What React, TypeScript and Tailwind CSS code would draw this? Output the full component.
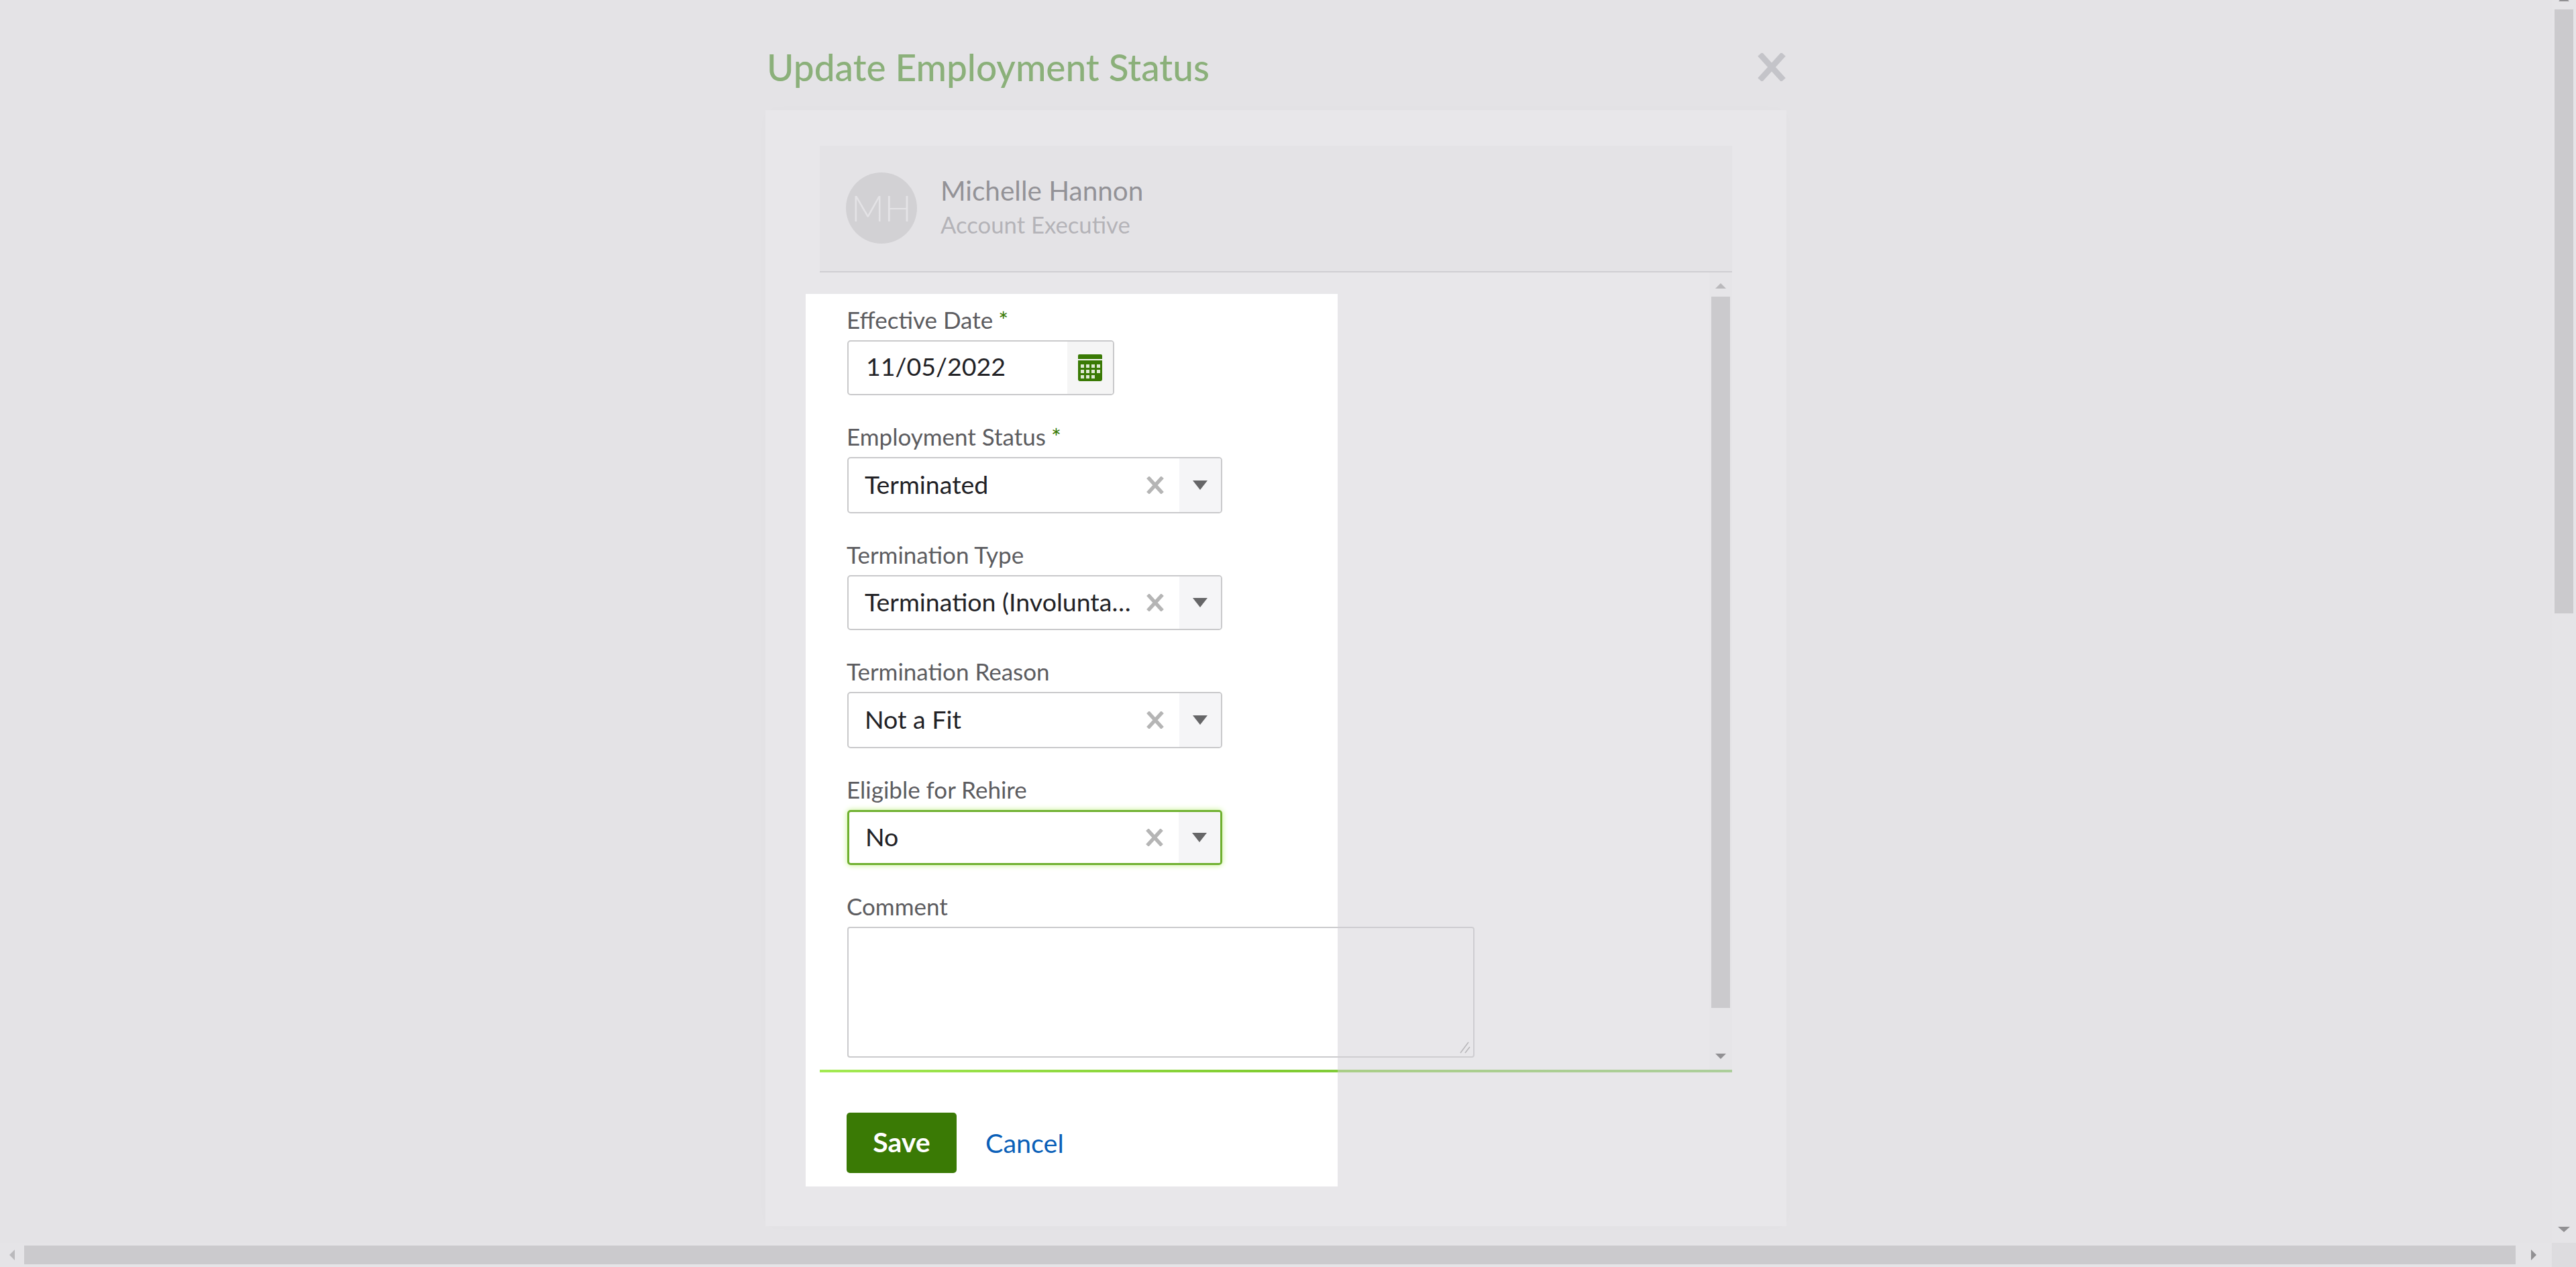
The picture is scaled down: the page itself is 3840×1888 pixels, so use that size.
import React from 'react';

function Cross({ className }: { className: string }) {
  return (
    <svg viewBox="0 0 24 24" className={className} fill="none" stroke="currentColor" strokeWidth="5">
      <path d="M2 1 L22 23 M22 1 L2 23" />
    </svg>
  );
}

function Arrow({ dir, className }: { dir: 'up' | 'down' | 'left' | 'right'; className: string }) {
  const points = {
    up: '8,0 16,8 0,8',
    down: '0,0 16,0 8,8',
    left: '8,0 8,16 0,8',
    right: '0,0 8,8 0,16',
  }[dir];
  const box = dir === 'up' || dir === 'down' ? '0 0 16 8' : '0 0 8 16';
  return (
    <svg viewBox={box} preserveAspectRatio="none" className={className} fill="currentColor">
      <polygon points={points} />
    </svg>
  );
}

function CalendarIcon() {
  const cells = [
    [4, 15], [12, 15], [20, 15], [28, 15],
    [4, 23], [12, 23], [20, 23], [28, 23],
    [4, 31], [12, 31], [20, 31],
  ];
  return (
    <svg viewBox="0 0 36 40" className="w-[36px] h-[40px]">
      <path d="M2 0 H34 Q36 0 36 2 V7 H0 V2 Q0 0 2 0 Z" fill="#3a7a05" />
      <path d="M0 9 H36 V37 Q36 40 33 40 H3 Q0 40 0 37 Z" fill="#3a7a05" />
      {cells.map(([x, y]) => (
        <rect key={`${x}-${y}`} x={x} y={y} width="5" height="5" fill="#dfe9d4" />
      ))}
    </svg>
  );
}

function Label({ text, required }: { text: string; required?: boolean }) {
  return (
    <div className="h-[42px] ml-[-1px] text-[35px] leading-[42px] text-[#5c5c60] whitespace-nowrap">
      {text}
      {required && <span className="ml-[8px] text-[#3a7a05]">*</span>}
    </div>
  );
}

function SelectBox({ value, focused, height }: { value: string; focused?: boolean; height: string }) {
  return (
    <div
      className={`flex w-[559px] ${height} rounded-[5px] bg-white overflow-hidden ${
        focused ? 'border-[3px] border-[#6fb02f] shadow-[0_0_8px_#c4f08a]' : 'border-2 border-[#c9c9cb]'
      }`}
    >
      <div className="flex-1 min-w-0 pl-[24px] pb-[2px] flex items-center">
        <span className="truncate text-[37.5px] text-[#222226]">{value}</span>
      </div>
      <div className="w-[66px] flex items-center justify-center">
        <Cross className="w-[26px] h-[26px] text-[#b5b5b5] ml-[-6px]" />
      </div>
      <div className="w-[62px] bg-[#f5f5f7] flex items-center justify-center">
        <Arrow dir="down" className="w-[22px] h-[14px] text-[#666668]" />
      </div>
    </div>
  );
}

const fields = [
  { label: 'Employment Status', value: 'Terminated', required: true, wrap: 'h-[176px]', height: 'h-[84px]' },
  { label: 'Termination Type', value: 'Termination (Involuntary)', wrap: 'h-[174px]', height: 'h-[82px]' },
  { label: 'Termination Reason', value: 'Not a Fit', wrap: 'h-[176px]', height: 'h-[84px]' },
  { label: 'Eligible for Rehire', value: 'No', focused: true, wrap: 'h-[174px]', height: 'h-[82px]' },
];

export default function App() {
  return (
    <div className="relative w-[3840px] h-[1888px] overflow-hidden bg-[#f7f7f7] flex flex-col font-['Lato',sans-serif]">
      <div className="flex h-[1852px]">
        <div className="flex-1 min-w-0 pl-[1141px]">
          <div className="w-[1522px]">
            {/* title row */}
            <div className="h-[164px] pt-[66px] pl-[2px] flex justify-between items-start">
              <h1 className="text-[55px] leading-[68px] font-medium text-[#44911f] whitespace-nowrap">
                Update Employment Status
              </h1>
              <Cross className="w-[44px] h-[42px] mt-[13px] text-[#b7b9bc]" />
            </div>

            {/* card */}
            <div className="h-[1663px] bg-white shadow-[0_0_24px_rgba(0,0,0,0.025)] px-[81px] pt-[53px]">
              <div className="h-[189px] bg-[#f7f7f7] border-b-2 border-[#cfcfd1] flex items-center pl-[39px]">
                <div className="w-[106px] h-[106px] rounded-full bg-[#d3d3d3] flex items-center justify-center text-[54px] text-[#f7f7f7] font-light mt-[-2px]">
                  MH
                </div>
                <div className="ml-[35px] mt-[-4px]">
                  <div className="text-[40.5px] leading-[52px] text-[#555558]">Michelle Hannon</div>
                  <div className="text-[34.7px] leading-[50px] text-[#97979a]">Account Executive</div>
                </div>
              </div>

              <div className="flex h-[1188px]">
                <div className="flex-1 min-w-0 pl-[41px] pt-[49px]">
                  <div className="h-[174px]">
                    <Label text="Effective Date" required />
                    <div className="mt-[10px] flex w-[398px] h-[82px] rounded-[5px] border-2 border-[#c9c9cb] overflow-hidden">
                      <div className="flex-1 pl-[26px] pb-[3px] flex items-center text-[37.5px] text-[#222226]">11/05/2022</div>
                      <div className="w-[68px] bg-[#f5f5f5] flex items-center justify-center">
                        <CalendarIcon />
                      </div>
                    </div>
                  </div>
                  {fields.map((f) => (
                    <div key={f.label} className={f.wrap}>
                      <Label text={f.label} required={f.required} />
                      <div className="mt-[10px]">
                        <SelectBox value={f.value} focused={f.focused} height={f.height} />
                      </div>
                    </div>
                  ))}
                  <div>
                    <Label text="Comment" />
                    <div className="relative mt-[10px] w-[935px] h-[195px]">
                      <textarea className="block w-full h-full resize-none rounded-[4px] border-2 border-[#cbcbcd] bg-transparent outline-none" />
                      <svg viewBox="0 0 16 18" className="absolute right-[6px] bottom-[6px] w-[16px] h-[18px]" fill="none" stroke="#a0a0a0" strokeWidth="1.6">
                        <path d="M1 17 L13 1 M8 17 L15 8" />
                      </svg>
                    </div>
                  </div>
                </div>

                {/* inner scrollbar */}
                <div className="w-[34px] bg-[#fafafa] flex flex-col items-center">
                  <div className="h-[36px] flex items-center justify-center shrink-0 pt-[4px]">
                    <Arrow dir="up" className="w-[16px] h-[8px] text-[#a3a3a3]" />
                  </div>
                  <div className="w-[28px] h-[1060px] bg-[#c5c5c5] shrink-0" />
                  <div className="flex-1 flex items-end pb-[16px]">
                    <Arrow dir="down" className="w-[16px] h-[8px] text-[#505050]" />
                  </div>
                </div>
              </div>

              <div className="h-[4px] bg-gradient-to-r from-[#a3ea52] via-[#80cc30] to-[#86cc60]" />

              <div className="pt-[60px] pl-[40px] flex items-center">
                <button className="w-[164px] h-[90px] pb-[2px] rounded-[5px] bg-[#3a7a05] text-white text-[41px] font-bold">
                  Save
                </button>
                <a className="ml-[43px] text-[39.5px] text-[#0a5fb8]">Cancel</a>
              </div>
            </div>
          </div>
        </div>

        {/* page vertical scrollbar */}
        <div className="w-[36px] bg-[#f9f9f9] flex flex-col items-center shrink-0">
          <div className="h-[14px] shrink-0 overflow-hidden flex flex-col items-center">
            <div className="mt-[-6px]">
              <Arrow dir="up" className="w-[16px] h-[8px] text-[#505050]" />
            </div>
          </div>
          <div className="w-[28px] h-[900px] bg-[#c5c5c5] shrink-0" />
          <div className="flex-1 flex items-end pb-[16px]">
            <Arrow dir="down" className="w-[18px] h-[8px] text-[#505050]" />
          </div>
        </div>
      </div>

      {/* page horizontal scrollbar */}
      <div className="h-[36px] flex">
        <div className="w-[3804px] bg-[#f9f9f9] flex items-center">
          <div className="w-[36px] shrink-0 flex justify-center">
            <Arrow dir="left" className="w-[8px] h-[16px] text-[#a3a3a3]" />
          </div>
          <div className="w-[3714px] h-[28px] bg-[#c5c5c5]" />
          <div className="flex-1 flex justify-center">
            <Arrow dir="right" className="w-[8px] h-[16px] text-[#505050]" />
          </div>
        </div>
        <div className="flex-1 bg-[#e9e9e9]" />
      </div>

      {/* tour spotlight: the shadow dims all but this box */}
      <div className="absolute left-[1201px] top-[438px] w-[793px] h-[1330px] pointer-events-none shadow-[0_0_0_4000px_rgba(210,208,214,0.5)]" />
    </div>
  );
}
